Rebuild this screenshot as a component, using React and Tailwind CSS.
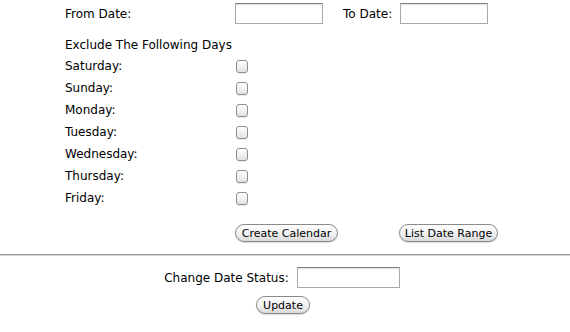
const days = ['Saturday', 'Sunday', 'Monday', 'Tuesday', 'Wednesday', 'Thursday', 'Friday']

function TextBox({ className = '' }) {
  return (
    <input
      type="text"
      className={`h-[21px] bg-white border border-[#a9a9a9] border-t-[#7d7d7d] shadow-[inset_0_1px_1px_rgba(0,0,0,0.12)] outline-none ${className}`}
    />
  )
}

function PillButton({ children, className = '' }) {
  return (
    <button
      className={`h-[18px] px-0 rounded-full border border-[#8a8a8a] bg-gradient-to-b from-white via-[#f3f3f3] to-[#d9d9d9] text-[11px] leading-none whitespace-nowrap text-black shadow-[0_1px_1px_rgba(0,0,0,0.15)] ${className}`}
    >
      {children}
    </button>
  )
}

function Checkbox() {
  return (
    <span className="block w-[12px] h-[13px] rounded-[3px] border border-[#8f8f8f] bg-gradient-to-b from-white to-[#e2e2e2] shadow-[0_1px_0_rgba(0,0,0,0.08)]" />
  )
}

export default function App() {
  return (
    <div className="w-[570px] h-[332px] bg-white text-black text-[12px] overflow-hidden" style={{ fontFamily: '"DejaVu Sans", Verdana, sans-serif' }}>
      <div className="pt-[3px] pl-[65px]">
        <div className="flex items-center h-[21px]">
          <span className="w-[170px]">From Date:</span>
          <TextBox className="w-[88px]" />
          <span className="ml-[20px] w-[57px]">To Date:</span>
          <TextBox className="w-[88px]" />
        </div>

        <div className="mt-[11px] h-[20px] flex items-center">Exclude The Following Days</div>

        <div className="flex flex-col">
          {days.map((d) => (
            <div key={d} className="flex items-center h-[22px]">
              <span className="w-[171px]">{d}:</span>
              <Checkbox />
            </div>
          ))}
        </div>

        <div className="flex items-center mt-[15px] pl-[170px]">
          <PillButton className="w-[103px]">Create Calendar</PillButton>
          <PillButton className="ml-[61px] w-[99px]">List Date Range</PillButton>
        </div>
      </div>

      <div className="mt-[12px] h-[2px] bg-[#9a9a9a] border-b border-[#d4d4d4]" />

      <div className="mt-[11px] flex justify-center items-center pr-[6px]">
        <span className="mr-[8px]">Change Date Status:</span>
        <TextBox className="w-[103px]" />
      </div>
      <div className="mt-[8px] flex justify-center pr-[4px]">
        <PillButton className="w-[54px]">Update</PillButton>
      </div>
    </div>
  )
}
